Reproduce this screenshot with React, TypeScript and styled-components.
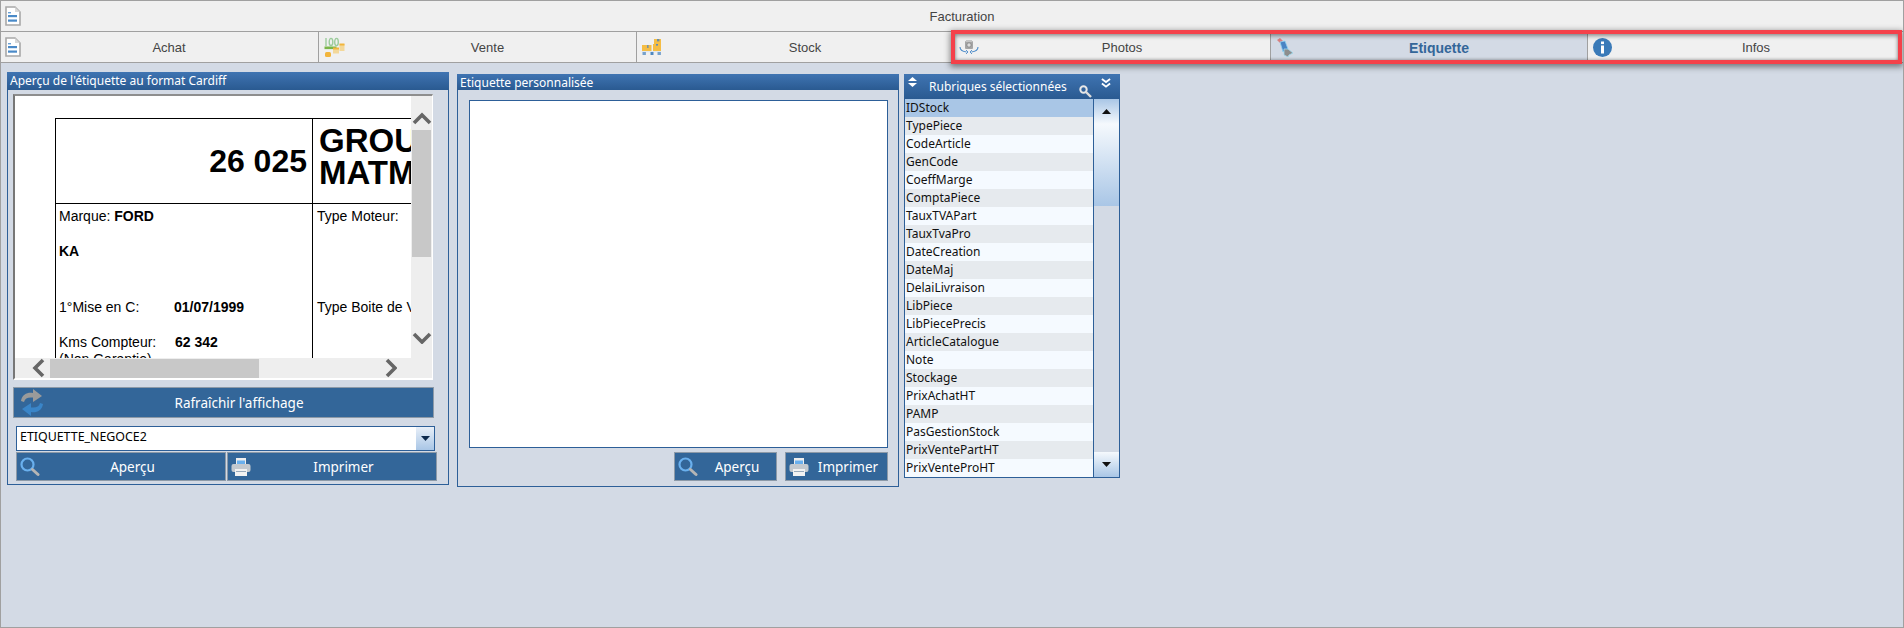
import React from "react";
import styled, { createGlobalStyle } from "styled-components";

const Global = createGlobalStyle`
  html, body { margin: 0; padding: 0; height: 100%; background: #d3dae5; overflow: hidden; }
  #root { height: 100%; }
  * { box-sizing: border-box; }
`;

const Page = styled.div`
  width: 1904px; height: 628px; background: #d3dae5;
  border: 1px solid #a0a0a0;
  font-family: "Liberation Sans", Arial, sans-serif; overflow: hidden;
`;
const Bar = styled.div`
  display: flex; height: 31px; background: #f0f0f0; border-bottom: 1px solid #a0a0a0; margin-left: -1px;
`;
const Tab = styled.div<{ $active?: boolean; $w: number; $first?: boolean }>`
  width: ${p => p.$w}px; flex: none; display: flex; align-items: center; padding-left: 5px;
  background: ${p => (p.$active ? "#d3dae5" : "#f0f0f0")};
  border-left: ${p => (p.$first ? "none" : "1px solid #a0a0a0")};
  color: ${p => (p.$active ? "#336699" : "#444")};
  font-size: ${p => (p.$active ? 14 : 13)}px; font-weight: ${p => (p.$active ? 700 : 400)};
`;
const TabIcon = styled.span`
  width: 15px; flex: none; display: flex; align-items: center; overflow: visible;
  svg { flex: none; display: block; }
`;
const TabLabel = styled.span`flex: 1; text-align: center; padding-top: 1px;`;
const Highlight = styled.div`
  display: flex; position: relative; flex: none;
  &::after {
    content: ""; position: absolute; top: -2px; bottom: -2px; left: -2px; right: 2px;
    border: 4px solid #f4414a; pointer-events: none;
    box-shadow: 0 2px 6px 1px rgba(0,0,0,.45), inset 0 2px 4px rgba(0,0,0,.4), inset 0 -1px 3px rgba(0,0,0,.2);
  }
`;
const Content = styled.div`
  display: flex; align-items: flex-start; padding: 9px 0 0 6px;
`;
const Panel = styled.section<{ $w: number; $h: number; $mt?: number; $ml?: number }>`
  flex: none; width: ${p => p.$w}px; height: ${p => p.$h}px;
  margin-top: ${p => p.$mt ?? 0}px; margin-left: ${p => p.$ml ?? 0}px;
  border: 1px solid #2d5f98; border-top: none; display: flex; flex-direction: column;
`;
const PanelHead = styled.header<{ $h?: number }>`
  height: ${p => p.$h ?? 18}px; flex: none; margin: 0 -1px;
  background: linear-gradient(#3f74b2, #2a5a91);
  color: #fff; font: 12px/18px "Noto Sans", Tahoma, sans-serif; padding-left: 3px; white-space: nowrap;
`;
const PreviewBody = styled.div`
  flex: 1; display: flex; flex-direction: column; padding: 4px 0 0 5px;
`;
const Frame = styled.div`
  width: 420px; height: 286px; flex: none;
  border-top: 2px solid #8e8e8e; border-left: 2px solid #777; border-right: 1px solid #fff; border-bottom: 2px solid #fff;
  display: grid; grid-template-columns: 396px 21px; grid-template-rows: 262px 20px;
  background: #eee;
`;
const Viewport = styled.div`
  background: #fff; overflow: hidden; padding: 22px 0 0 40px; color: #000;
`;
const Doc = styled.div`
  width: 700px; display: grid; grid-template-columns: 257px 443px; grid-template-rows: 85px 400px;
  border-top: 1px solid #000; border-left: 1px solid #000;
`;
const HeadCell = styled.div`
  border-right: 1px solid #000; border-bottom: 1px solid #000;
`;
const Cell = styled.div<{ $right?: boolean }>`
  border-right: 1px solid #000;
  padding: ${p => (p.$right ? "4px 0 0 4px" : "4px 0 0 3px")};
  font-size: 14px; line-height: 17px;
`;
const BigNumber = styled.div`
  height: 100%; display: flex; align-items: flex-end; justify-content: flex-end; padding: 0 5px 23px 0;
  font-size: 32px; line-height: 37px; font-weight: 700;
`;
const BigTitle = styled.div`
  padding: 6px 0 0 6px; font-size: 33px; line-height: 32px; font-weight: 700; white-space: nowrap;
`;
const Line = styled.div<{ $gap?: number }>`
  margin-top: ${p => p.$gap ?? 0}px; white-space: nowrap; height: 17px;
`;
const Lab = styled.span<{ $w?: number }>`display: inline-block; width: ${p => p.$w ?? 115}px;`;
const VTrack = styled.div`
  background: #eee; display: flex; flex-direction: column; align-items: center;
`;
const ArrowV = styled.div`
  height: 34px; display: flex; align-items: flex-end; justify-content: center; width: 100%; padding-bottom: 5px;
  svg { display: block; }
`;
const VThumb = styled.div`width: 19px; height: 127px; background: #c8c8c8;`;
const ArrowVDown = styled.div`margin-top: 73px; svg { display: block; }`;
const HTrack = styled.div`
  background: #eee; grid-column: 1 / 3; display: flex; align-items: center; position: relative;
`;
const HThumb = styled.div`width: 209px; height: 19px; background: #c8c8c8; margin-left: 35px;`;
const ArrowLeft = styled.div`position: absolute; left: 16px; top: 0; svg { display: block; }`;
const ArrowRight = styled.div`margin-left: 124px; svg { display: block; }`;
const BlueBtn = styled.div<{ $w: number; $h: number; $slot?: number }>`
  width: ${p => p.$w}px; height: ${p => p.$h}px; flex: none; display: flex; align-items: center;
  background: #336699; border: 1px solid #8d9aa8; color: #fff;
  font: 13.5px "Noto Sans", Tahoma, sans-serif; padding-left: ${p => p.$slot ?? 3}px;
  svg { flex: none; display: block; }
`;
const BtnLabel = styled.span`flex: 1; text-align: center;`;
const RefreshRow = styled.div`margin-top: 7px;`;
const Combo = styled.div`
  margin: 8px 0 1px 3px; width: 419px; height: 25px; background: #fff; border: 1px solid #2d5f98;
  display: flex; flex: none; font: 12.4px/20px "Noto Sans", Tahoma, sans-serif; color: #000;
`;
const ComboText = styled.span`flex: 1; padding-left: 3px;`;
const ComboBtn = styled.span`
  width: 18px; background: linear-gradient(#e8eff8, #a9c6e6); display: flex; align-items: center; justify-content: center;
`;
const BtnRow = styled.div<{ $pl?: number; $gap?: number; $mt?: number }>`
  display: flex; gap: ${p => p.$gap ?? 1}px; padding-left: ${p => p.$pl ?? 3}px; margin-top: ${p => p.$mt ?? 0}px;
`;
const Sheet = styled.div`
  margin: 10px 0 0 11px; width: 419px; height: 348px; background: #fff; border: 1px solid #2d5f98; flex: none;
`;
const ListHead = styled.header`
  height: 25px; flex: none; margin: 0 -1px; position: relative;
  background: linear-gradient(#3f74b2, #2a5a91);
  color: #fff; font: 12px/26px "Noto Sans", Tahoma, sans-serif; padding-left: 25px; white-space: nowrap;
`;
const HeadIcon = styled.span<{ $x: number; $y: number }>`
  position: absolute; left: ${p => p.$x}px; top: ${p => p.$y}px; display: block; line-height: 0;
`;
const ListBody = styled.div`display: flex; flex: 1;`;
const List = styled.ul`
  list-style: none; margin: 0; padding: 0; width: 189px; flex: none; border-right: 1px solid #2d5f98;
`;
const Row = styled.li<{ $sel?: boolean; $even?: boolean }>`
  height: 18px; padding-left: 1px; color: #111;
  font: 12px/18px "Noto Sans", Tahoma, sans-serif; white-space: nowrap;
  background: ${p => (p.$sel ? "#a9c6e6" : p.$even ? "#e6eaee" : "#f5faff")};
`;
const ListBar = styled.div`flex: 1; display: flex; flex-direction: column;`;
const BarUp = styled.div`
  height: 25px; background: linear-gradient(#a9c6e6, #f5f9fd); display: flex; align-items: center; justify-content: center;
`;
const BarThumb = styled.div`height: 82px; background: linear-gradient(#f5f9fd, #a9c6e6);`;
const BarGap = styled.div`flex: 1;`;
const BarDown = styled.div`
  height: 25px; background: linear-gradient(#f5f9fd, #a9c6e6); display: flex; align-items: center; justify-content: center;
`;

const DocIcon = () => (
  <svg width="16" height="20" viewBox="0 0 16 20">
    <path d="M1 1h9l5 5v13H1z" fill="#fff" stroke="#a8a8a8" strokeWidth="1.6" />
    <path d="M10 1v5h5z" fill="#d8d8d8" />
    <rect x="3" y="6" width="3" height="1.4" fill="#6aa0d4" />
    <rect x="3" y="9" width="9" height="2.2" fill="#4a8ac8" />
    <rect x="3" y="13.5" width="9" height="2.2" fill="#4a8ac8" />
  </svg>
);
const MoneyIcon = () => (
  <svg width="21" height="20" viewBox="0 0 21 20">
    <g fill="none" stroke="#9ccc9c" strokeWidth="1.4">
      <path d="M2 1v8" />
      <ellipse cx="7" cy="5" rx="1.8" ry="3.6" />
      <ellipse cx="12.5" cy="5" rx="1.8" ry="3.6" />
    </g>
    <rect x="0.5" y="9.500" width="12" height="2.600" fill="#7ab648" />
    <rect x="15.500" y="7" width="5" height="7" fill="#f3d89a" />
    <rect x="15.500" y="6.500" width="5" height="2" fill="#f2b53c" />
    <rect x="9" y="11" width="6" height="5.500" fill="#f3d89a" />
    <rect x="9" y="10.500" width="6" height="2" fill="#f2b53c" />
    <rect x="1" y="15" width="6" height="5" rx="1.500" fill="#f2b53c" />
  </svg>
);
const PalletIcon = () => (
  <svg width="20" height="16" viewBox="0 0 20 16">
    <rect x="12" y="0" width="7" height="5" fill="#f5bd45" />
    <rect x="15" y="0" width="2.400" height="2.400" fill="#6b8fa8" />
    <rect x="0" y="6" width="9.500" height="6" fill="#f5bd45" />
    <rect x="5" y="6" width="1.600" height="3" fill="#7a94a0" />
    <rect x="11" y="5" width="8" height="7" fill="#f5bd45" />
    <rect x="14" y="5" width="2" height="1.600" fill="#5b8cc0" />
    <rect x="0" y="12" width="19" height="1.400" fill="#dfe7ef" />
    <rect x="0.500" y="13" width="3.400" height="3" fill="#76a1cc" />
    <rect x="8.500" y="13" width="3" height="3" fill="#4f88c0" />
    <rect x="15.500" y="13" width="3.400" height="3" fill="#76a1cc" />
  </svg>
);
const PhotoIcon = () => (
  <svg width="20" height="15" viewBox="0 0 20 15">
    <rect x="6" y="1" width="8" height="8" rx="1" fill="#a5a5a5" />
    <rect x="7" y="0" width="6" height="2" fill="#c5c5c5" />
    <circle cx="10" cy="5" r="2.200" fill="#dcdcdc" stroke="#808080" strokeWidth=".8" />
    <path d="M1 7c0 3 2.500 4.500 6.500 5M19 7c0 3-2.500 4.500-6.500 5" fill="none" stroke="#4a8ac8" strokeWidth="1.100" />
    <path d="M7 10l2 2-2 2M13 10l-2 2 2 2" fill="none" stroke="#4a8ac8" strokeWidth=".9" />
  </svg>
);
const LabelIcon = () => (
  <svg width="18" height="19" viewBox="0 0 18 19">
    <path d="M1 2l3-2 3 3-3 2z" fill="#d98080" />
    <path d="M4 4l5-1 3 8-5 3z" fill="#4a84c4" stroke="#8fd0ef" strokeWidth=".8" />
    <path d="M8 11l4 0 5 4-4 2-1 2-4-2z" fill="#8d8d8d" stroke="#9fdcf0" strokeWidth=".8" />
  </svg>
);
const InfoIcon = () => (
  <svg width="19" height="19" viewBox="0 0 19 19">
    <circle cx="9.500" cy="9.500" r="9.500" fill="#3a7ab8" />
    <rect x="8" y="3.500" width="3" height="2.600" fill="#fff" />
    <rect x="8" y="7.500" width="3" height="8" fill="#fff" />
  </svg>
);
const Chevron = ({ dir }: { dir: "up" | "down" | "left" | "right" }) => {
  const d = {
    up: "M2 12L10 4l8 8",
    down: "M2 4l8 8 8-8",
    left: "M12 2L4 10l8 8",
    right: "M4 2l8 8-8 8",
  }[dir];
  const horizontal = dir === "left" || dir === "right";
  return (
    <svg width={horizontal ? 14 : 20} height={horizontal ? 20 : 14} viewBox={horizontal ? "0 0 14 20" : "0 0 20 14"}>
      <path d={d} fill="none" stroke="#666" strokeWidth="3.600" />
    </svg>
  );
};
const RefreshIcon = () => (
  <svg width="26" height="29" viewBox="0 0 26 29">
    <path d="M2 13C3 6 9 4 14 5l0-4 9 7-9 6V9.500C9 9 6 10 5 14z" fill="#9a9a9a" />
    <path d="M24 16c-1 7-7 9-12 8l0 4-9-7 9-6v4.500c5 .5 8-.5 9-4.500z" fill="#3a85c8" />
  </svg>
);
const SearchIcon = () => (
  <svg width="20" height="20" viewBox="0 0 20 20">
    <circle cx="7.500" cy="7.500" r="6" fill="none" stroke="#6ab0ee" strokeWidth="2.200" />
    <path d="M12.500 12.500l5.500 5" stroke="#b5b5b5" strokeWidth="3" strokeLinecap="round" />
  </svg>
);
const PrintIcon = () => (
  <svg width="20" height="20" viewBox="0 0 20 20">
    <rect x="5" y="1" width="10" height="7" fill="#eee" />
    <rect x="6" y="3.500" width="8" height="3.500" fill="#6ab0ee" />
    <rect x="0.500" y="7" width="19" height="8" rx="2" fill="#c3c9cf" />
    <rect x="4" y="12" width="12" height="7" fill="#f2f2f2" />
    <rect x="5" y="14" width="10" height="1" fill="#9ab" />
  </svg>
);
const Tri = ({ up, color }: { up?: boolean; color: string }) => (
  <svg width="9" height="5" viewBox="0 0 9 5">
    <path d={up ? "M0 5L4.500 0 9 5z" : "M0 0h9L4.500 5z"} fill={color} />
  </svg>
);

const rubriques = [
  "IDStock", "TypePiece", "CodeArticle", "GenCode", "CoeffMarge", "ComptaPiece", "TauxTVAPart", "TauxTvaPro",
  "DateCreation", "DateMaj", "DelaiLivraison", "LibPiece", "LibPiecePrecis", "ArticleCatalogue", "Note", "Stockage",
  "PrixAchatHT", "PAMP", "PasGestionStock", "PrixVentePartHT", "PrixVenteProHT",
];

export default function App() {
  return (
    <Page>
      <Global />
      <Bar>
        <Tab $w={1904} $first>
          <TabIcon><DocIcon /></TabIcon>
          <TabLabel>Facturation</TabLabel>
        </Tab>
      </Bar>
      <Bar>
        <Tab $w={318} $first><TabIcon><DocIcon /></TabIcon><TabLabel>Achat</TabLabel></Tab>
        <Tab $w={318}><TabIcon><MoneyIcon /></TabIcon><TabLabel>Vente</TabLabel></Tab>
        <Tab $w={317}><TabIcon><PalletIcon /></TabIcon><TabLabel>Stock</TabLabel></Tab>
        <Highlight>
          <Tab $w={317}><TabIcon><PhotoIcon /></TabIcon><TabLabel>Photos</TabLabel></Tab>
          <Tab $w={317} $active><TabIcon><LabelIcon /></TabIcon><TabLabel>Etiquette</TabLabel></Tab>
          <Tab $w={317}><TabIcon><InfoIcon /></TabIcon><TabLabel>Infos</TabLabel></Tab>
        </Highlight>
      </Bar>
      <Content>
        <Panel $w={442} $h={413}>
          <PanelHead>Aperçu de l'étiquette au format Cardiff</PanelHead>
          <PreviewBody>
            <Frame>
              <Viewport>
                <Doc>
                  <HeadCell><BigNumber>26 025</BigNumber></HeadCell>
                  <HeadCell><BigTitle>GROUPE<br />MATMUT</BigTitle></HeadCell>
                  <Cell>
                    <Line>Marque: <b>FORD</b></Line>
                    <Line $gap={18}><b>KA</b></Line>
                    <Line $gap={39}><Lab>1°Mise en C:</Lab><b>01/07/1999</b></Line>
                    <Line $gap={18}><Lab $w={116}>Kms Compteur:</Lab><b>62 342</b></Line>
                    <Line>(Non Garantie)</Line>
                  </Cell>
                  <Cell $right>
                    <Line>Type Moteur:</Line>
                    <Line $gap={74}>Type Boite de Vitesse:</Line>
                  </Cell>
                </Doc>
              </Viewport>
              <VTrack>
                <ArrowV><Chevron dir="up" /></ArrowV>
                <VThumb />
                <ArrowVDown><Chevron dir="down" /></ArrowVDown>
              </VTrack>
              <HTrack>
                <HThumb />
                <ArrowRight><Chevron dir="right" /></ArrowRight>
                <ArrowLeft><Chevron dir="left" /></ArrowLeft>
              </HTrack>
            </Frame>
            <RefreshRow>
              <BlueBtn $w={421} $h={31} $slot={5}>
                <RefreshIcon />
                <BtnLabel>Rafraîchir l'affichage</BtnLabel>
              </BlueBtn>
            </RefreshRow>
            <Combo>
              <ComboText>ETIQUETTE_NEGOCE2</ComboText>
              <ComboBtn><Tri color="#0d2a4d" /></ComboBtn>
            </Combo>
            <BtnRow>
              <BlueBtn $w={210} $h={29}><SearchIcon /><BtnLabel>Aperçu</BtnLabel></BlueBtn>
              <BlueBtn $w={210} $h={29}><PrintIcon /><BtnLabel>Imprimer</BtnLabel></BlueBtn>
            </BtnRow>
          </PreviewBody>
        </Panel>
        <Panel $w={442} $h={413} $mt={2} $ml={8}>
          <PanelHead $h={16}>Etiquette personnalisée</PanelHead>
          <Sheet />
          <BtnRow $pl={216} $gap={8} $mt={4}>
            <BlueBtn $w={103} $h={29}><SearchIcon /><BtnLabel>Aperçu</BtnLabel></BlueBtn>
            <BlueBtn $w={103} $h={29}><PrintIcon /><BtnLabel>Imprimer</BtnLabel></BlueBtn>
          </BtnRow>
        </Panel>
        <Panel $w={216} $h={404} $mt={2} $ml={5}>
          <ListHead>
            <HeadIcon $x={4} $y={3}>
              <svg width="9" height="10" viewBox="0 0 9 10"><path d="M4.500 0L9 4H0zM0 6h9L4.500 10z" fill="#fff" /></svg>
            </HeadIcon>
            Rubriques sélectionnées
            <HeadIcon $x={175} $y={11}>
              <svg width="13" height="13" viewBox="0 0 13 13">
                <circle cx="4.500" cy="4.500" r="3.200" fill="none" stroke="#e8e8e8" strokeWidth="2" />
                <path d="M7 7l5 5" stroke="#ddd" strokeWidth="2.400" />
              </svg>
            </HeadIcon>
            <HeadIcon $x={197} $y={4}>
              <svg width="10" height="10" viewBox="0 0 11 11">
                <path d="M1 1l4.500 3.500L10 1M1 6l4.500 3.500L10 6" fill="none" stroke="#fff" strokeWidth="2" />
              </svg>
            </HeadIcon>
          </ListHead>
          <ListBody>
            <List>
              {rubriques.map((r, i) => (
                <Row key={r} $sel={i === 0} $even={i % 2 === 1}>{r}</Row>
              ))}
            </List>
            <ListBar>
              <BarUp><Tri up color="#111" /></BarUp>
              <BarThumb />
              <BarGap />
              <BarDown><Tri color="#111" /></BarDown>
            </ListBar>
          </ListBody>
        </Panel>
      </Content>
    </Page>
  );
}
